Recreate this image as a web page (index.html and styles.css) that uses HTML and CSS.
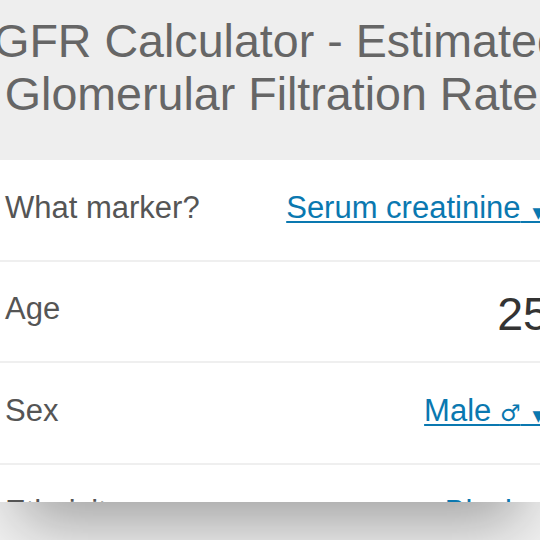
FILE: index.html
```html
<!DOCTYPE html>
<html lang="en">
<head>
    <meta charset="UTF-8">
    <meta name="viewport" content="width=device-width, initial-scale=1.0">
    <title>eGFR Calculator</title>
    <link rel="stylesheet" href="styles.css">
</head>
<body>

    <div class="screen">
        <div class="page">
            <header class="header">
                <h1>eGFR Calculator - Estimated&nbsp;<br>Glomerular Filtration Rate</h1>
            </header>

            <div class="form">
                <div class="row">
                    <span class="label">What marker?</span>
                    <a href="#" class="select">Serum creatinine<span class="caret">&nbsp;&thinsp;▾</span></a>
                </div>
                <div class="row">
                    <span class="label">Age</span>
                    <input class="number" type="text" value="25">
                </div>
                <div class="row">
                    <span class="label">Sex</span>
                    <a href="#" class="select">Male <span class="sign">♂</span><span class="caret">&nbsp;&thinsp;▾</span></a>
                </div>
                <div class="row">
                    <span class="label">Ethnicity</span>
                    <a href="#" class="select">Black<span class="caret">&nbsp;&thinsp;▾</span></a>
                </div>
            </div>
        </div>
    </div>

</body>
</html>
```

FILE: styles.css
```css
* {
    box-sizing: border-box;
}

body {
    margin: 0;
    height: 540px;
    overflow: hidden;
    background-color: #f2f2f2;
    font-family: "Liberation Sans", Arial, Helvetica, sans-serif;
}

.screen {
    width: 540px;
    height: 502px;
    overflow: hidden;
    background-color: #ffffff;
    box-shadow: 0 40px 60px -20px rgba(0, 0, 0, 0.35);
}

.page {
    width: 554px;
}

/* cabecera */
.header {
    height: 160px;
    margin: 0 -23.5px 0 -34.5px;
    padding-top: 15px;
    background-color: #eeeeee;
    text-align: center;
}

.header h1 {
    margin: 0;
    font-size: 46.6px;
    font-weight: normal;
    line-height: 53px;
    color: #666666;
    white-space: nowrap;
}

/* filas del formulario */
.row {
    display: flex;
    justify-content: space-between;
    align-items: center;
    height: 101.5px;
    padding: 0 5px 4px 5px;
    border-bottom: 2px solid #efefef;
}

.label {
    font-size: 31px;
    color: #555555;
}

.select {
    font-size: 31px;
    color: #0a78b0;
    text-decoration: underline;
    text-decoration-thickness: 2px;
    text-underline-offset: 3px;
    white-space: nowrap;
}

.sign {
    font-family: "DejaVu Sans", sans-serif;
    font-size: 23px;
}

.caret {
    margin-right: 5px;
    font-family: "DejaVu Sans", sans-serif;
    font-size: 23px;
    vertical-align: -2px;
}

.number {
    width: 140px;
    margin-top: 10px;
    padding: 0;
    border: none;
    background: transparent;
    font-family: inherit;
    font-size: 46.6px;
    color: #333333;
    text-align: right;
}
```
